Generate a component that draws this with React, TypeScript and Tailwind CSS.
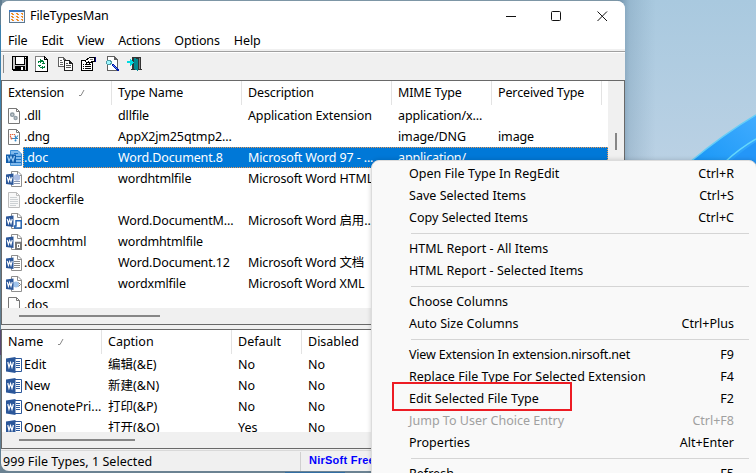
import React from "react";

const columns = ["w-[110px]", "w-[130px]", "w-[150px]", "w-[100px]", "w-[110px]"];
const lowerColumns = ["w-[100px]", "w-[130px]", "w-[70px]", "w-[90px]"];

type Kind = "gear" | "cut" | "doc" | "html" | "text" | "macro" | "mhtml" | "docx" | "xml" | "blank";

const files: { kind: Kind; cells: string[] }[] = [
  { kind: "gear", cells: [".dll", "dllfile", "Application Extension", "application/x...", ""] },
  { kind: "cut", cells: [".dng", "AppX2jm25qtmp2...", "", "image/DNG", "image"] },
  { kind: "doc", cells: [".doc", "Word.Document.8", "Microsoft Word 97 - ...", "application/", ""] },
  { kind: "html", cells: [".dochtml", "wordhtmlfile", "Microsoft Word HTML", "", ""] },
  { kind: "text", cells: [".dockerfile", "", "", "", ""] },
  { kind: "macro", cells: [".docm", "Word.DocumentM...", "Microsoft Word 启用...", "", ""] },
  { kind: "mhtml", cells: [".docmhtml", "wordmhtmlfile", "", "", ""] },
  { kind: "docx", cells: [".docx", "Word.Document.12", "Microsoft Word 文档", "", ""] },
  { kind: "xml", cells: [".docxml", "wordxmlfile", "Microsoft Word XML", "", ""] },
  { kind: "blank", cells: [".dos", "", "", "", ""] },
];

const verbs = [
  ["Edit", "编辑(&E)", "No", "No"],
  ["New", "新建(&N)", "No", "No"],
  ["OnenotePri...", "打印(&P)", "No", "No"],
  ["Open", "打开(&O)", "Yes", "No"],
];

const menu: ({ label: string; hint?: string; off?: boolean; tight?: boolean } | null)[] = [
  { label: "Open File Type In RegEdit", hint: "Ctrl+R" },
  { label: "Save Selected Items", hint: "Ctrl+S" },
  { label: "Copy Selected Items", hint: "Ctrl+C" },
  null,
  { label: "HTML Report - All Items" },
  { label: "HTML Report - Selected Items" },
  null,
  { label: "Choose Columns" },
  { label: "Auto Size Columns", hint: "Ctrl+Plus" },
  null,
  { label: "View Extension In extension.nirsoft.net", hint: "F9", tight: true },
  { label: "Replace File Type For Selected Extension", hint: "F4" },
  { label: "Edit Selected File Type", hint: "F2" },
  { label: "Jump To User Choice Entry", hint: "Ctrl+F8", off: true },
  { label: "Properties", hint: "Alt+Enter" },
  null,
  { label: "Refresh", hint: "F5" },
];

function WordBadge({ big }: { big?: boolean }) {
  return big ? (
    <>
      <path d="M0 1.6 9.5 0v16L0 14.4Z" fill="#2b579a" />
      <path d="M1.8 5 3 10.3 4.5 5.6 6 10.3 7.4 5" fill="none" stroke="#fff" strokeWidth="1.2" />
    </>
  ) : (
    <>
      <path d="M0 3.5 7.5 2.5v11.5L0 13Z" fill="#2b579a" />
      <path d="M1.2 6 2.4 10.3 3.7 6.5 5 10.3 6.2 6" fill="none" stroke="#fff" strokeWidth="1.1" />
    </>
  );
}

function FileIcon({ kind }: { kind: Kind }) {
  const wordy = ["html", "macro", "mhtml", "docx", "xml"].includes(kind);
  return (
    <svg viewBox="0 0 16 16" className="h-4 w-4 shrink-0">
      {(kind === "gear" || kind === "cut" || kind === "blank" || kind === "text") && (
        <path
          d="M2.5 .5H10.5L13.5 3.5V15.5H2.5ZM10.5 .5V3.5H13.5"
          fill={kind === "text" ? "#f8f8f8" : "#fdfdfd"}
          stroke={kind === "text" ? "#bdbdbd" : "#777"}
        />
      )}
      {kind === "gear" && (
        <>
          <circle cx="6.3" cy="6.7" r="1.7" fill="#c6cdd2" stroke="#8b98a1" strokeWidth="1.4" />
          <circle cx="9.6" cy="10" r="1.5" fill="#c6cdd2" stroke="#95a1aa" strokeWidth="1.4" />
        </>
      )}
      {kind === "cut" && (
        <>
          <path d="M4.5 8.5V5.5h4v2" fill="none" stroke="#e2633c" strokeWidth="1.2" strokeDasharray="1.5 .6" />
          <path d="M6 9.5h6M9.5 6.5v4M10 9l2-2.5" stroke="#3689c6" strokeWidth="1.1" />
          <circle cx="5.5" cy="9.5" r="1" fill="#d15f45" />
          <circle cx="9.5" cy="11.5" r="1" fill="#3689c6" />
        </>
      )}
      {kind === "text" && <path d="M4 5.5h7M4 7.5h8M4 9.5h8M4 11.5h8M4 13.5h6" stroke="#c2c6ca" strokeWidth=".8" />}
      {wordy && (
        <>
          <path d="M5.5 .5H12L15.5 4V15.5H5.5ZM11.5 .5V4.5H15.5" fill="#fff" stroke="#8f8f8f" />
          {kind === "docx" && <path d="M8 6.5h6M8 8.5h6M8 10.5h6M8 12.5h6" stroke="#888" />}
          {kind === "html" && (
            <>
              <circle cx="11" cy="6.5" r="3.2" fill="#aebfe4" />
              <path d="M8 10.5h6M8 12.5h6" stroke="#8b99b5" />
            </>
          )}
          {kind === "xml" && (
            <>
              <circle cx="10" cy="8.5" r="3" fill="#9fc3eb" />
              <path d="m12.5 6.5 2 2-2 2" fill="none" stroke="#777" />
            </>
          )}
          {kind === "macro" && <path d="M10 7.8h5.2V15H8.8v-2H10Z" fill="#fff" stroke="#2865b0" strokeWidth="1.5" />}
          {kind === "mhtml" && (
            <>
              <path d="M10 8.8h5V15H10Z" fill="#fff" stroke="#777" strokeWidth="2" />
              <path d="M12 11h1v2h-1Z" fill="#777" />
            </>
          )}
          <WordBadge />
        </>
      )}
      {kind === "doc" && (
        <>
          <path d="M4.5 .5H12L15.5 4V15.5H4.5Z" fill="#80b9ec" stroke="#3b8dd5" />
          <path d="M8 3.5h4M8 6.5h7M8 9.5h7M8 12.5h7" stroke="#1e74c5" />
          <path d="M0 4.5h10v8.5H0Z" fill="#0f5cab" />
          <path d="M1.5 6 3 11 5 6.5 7 11 8.5 6" fill="none" stroke="#9bcaf2" strokeWidth="1.2" />
        </>
      )}
    </svg>
  );
}

function VerbIcon() {
  return (
    <svg viewBox="0 0 16 16" className="h-4 w-4 shrink-0">
      <path d="M8 1.5h7.5v13H8Z" fill="#fff" stroke="#2b579a" />
      <path d="M10 4.5h4M10 6.5h4M10 8.5h4M10 10.5h4" stroke="#2b579a" />
      <WordBadge big />
    </svg>
  );
}

function Toolbar() {
  return (
    <div className="flex h-7 shrink-0 items-start border-t border-white bg-[#f0f0f0] pt-[3px] pl-[2px]">
      <span className="-mt-px h-[18px] w-px bg-[#8a8a8a]" />
      <svg viewBox="0 0 16 16" shapeRendering="crispEdges" className="ml-[8px] h-4 w-4">
        <path d="M0 0h16v15H1V14H0Z" fill="#000" />
        <path d="M1 1h2v12H1ZM13 3h1v11h-1ZM3 9h10v1H3Z" fill="#c8c8c8" />
        <path d="M4 1h8v7H4ZM13 1h1v1h-1Z" fill="#fff" />
        <path d="M9 11h2v3H9Z" fill="#fff" />
      </svg>
      <svg viewBox="0 0 14 16" shapeRendering="crispEdges" className="ml-[7px] h-4 w-[14px]">
        <path d="M0 0h10v1h1v1h1v1h1v13H0Z" fill="#000" />
        <path d="M0 0h9v1H1v14H0Z" fill="#808080" />
        <path d="M1 1h8v3h3v11H1Z" fill="#fff" />
        <path d="M10 2h1v1h-1Z" fill="#ddd" />
        <path d="M5 3h1v1h2v1h1v2h1v1H7V7h1V6H6v1H5V6H4v1H3V5h2ZM3 9h3v1H5v1h2v-1h1v1h1v-1h1v2H8v1H7v-1H5v-1H4v-1H3Z" fill="#00803c" />
      </svg>
      <svg viewBox="0 0 16 16" shapeRendering="crispEdges" className="ml-[9px] h-4 w-4">
        <path d="M0 1h6v1h1v1h1v8H0Z" fill="#606060" />
        <path d="M1 2h4v2h2v6H1Z" fill="#fff" />
        <path d="M2 4h2v1H2ZM2 6h3v1H2ZM2 8h3v1H2Z" fill="#666" />
        <path d="M6 4h6v1h1v1h1v1h1v8H6Z" fill="#222" />
        <path d="M7 5h4v3h3v6H7Z" fill="#fff" />
        <path d="M8 7h2v1H8ZM8 9h5v1H8ZM8 11h5v1H8Z" fill="#555" />
      </svg>
      <svg viewBox="0 0 16 16" shapeRendering="crispEdges" className="ml-[7px] h-4 w-4">
        <path d="M0 4h12v11H0Z" fill="#000" />
        <path d="M1 5h10v9H1Z" fill="#fff" />
        <path d="M2 8h1v1H2ZM4 8h6v1H4ZM2 10h1v1H2ZM4 10h6v1H4ZM2 12h1v1H2ZM4 12h6v1H4Z" fill="#000" />
        <path d="M3 4h2V3h1V2h2V1h6v5h-3v1h-2v1H8V7H6v1H5V6H4V5H3Z" fill="#000" />
        <path d="M5 4h2V3h1V2h5v3h-3v1H8V5H7v1H5Z" fill="#fff" />
        <path d="M9 3h3v1H9Z" fill="#777" />
        <path d="M14 1h1v5h-1Z" fill="#000080" />
      </svg>
      <svg viewBox="0 0 16 16" shapeRendering="crispEdges" className="ml-[8px] h-4 w-4">
        <path d="M2 0h8v1h1v1h1v1h1v12H2Z" fill="#606060" />
        <path d="M3 1h6v3h3v10H3Z" fill="#fff" />
        <path d="M2 4h4v1h1v3H6v1H2V8H1V5h1Z" fill="#4d9ba3" />
        <path d="M2 5h3v1h1v1H5v1H2Z" fill="#9ff6ff" />
        <path d="M7 8h2v1h1v1h1v1h1v1h1v1h1v2h-2v-1h-1v-1h-1v-1H9v-1H8v-1H7Z" fill="#0018a5" />
        <path d="M8 9h1v1h1v1h1v1h1v1h-1v-1h-1v-1H9v-1H8Z" fill="#5b8cff" />
      </svg>
      <svg viewBox="0 0 16 16" shapeRendering="crispEdges" className="ml-[6px] h-4 w-4">
        <path d="M5 1h9v12h1v1H4v-1h1Z" fill="#333" />
        <path d="M12 2h1v11h-1Z" fill="#808080" />
        <path d="M7 2h2v1h2v12h-1v-1H8v-1H7Z" fill="#008a91" />
        <path d="M0 5h3V3h1v1h1v1h1v1h1v1H6v1H5v1H4v1H3V7H0Z" fill="#00dbe2" />
      </svg>
    </div>
  );
}

function Header({ names, widths }: { names: string[]; widths: string[] }) {
  return (
    <div className="flex h-6 shrink-0">
      {names.map((n, i) => (
        <div key={n} className={`flex h-6 shrink-0 items-center border-r border-[#e3e3e3] pl-[6px] ${widths[i]}`}>
          {n}
          {i === 0 && (
            <svg viewBox="0 0 6 6" className="ml-[15px] h-[6px] w-[6px]">
              <path d="M0 5.5H2L5 0" fill="none" stroke="#888" />
            </svg>
          )}
        </div>
      ))}
    </div>
  );
}

function Desktop() {
  return (
    <svg viewBox="0 0 756 473" className="absolute inset-0 h-full w-full">
      <defs>
        <linearGradient id="sky" x1="0" y1="0" x2="0" y2="1">
          <stop offset="0" stopColor="#a9c9df" />
          <stop offset=".34" stopColor="#bad1e4" />
          <stop offset="1" stopColor="#90adc3" />
        </linearGradient>
        <linearGradient id="shade">
          <stop offset="0" stopColor="#4a6b85" stopOpacity=".62" />
          <stop offset=".3" stopColor="#5f829c" stopOpacity=".25" />
          <stop offset="1" stopColor="#6f91aa" stopOpacity="0" />
        </linearGradient>
        <linearGradient id="petal" x1="0" y1="1" x2="1" y2="0">
          <stop offset="0" stopColor="#1595f5" />
          <stop offset="1" stopColor="#41acff" />
        </linearGradient>
      </defs>
      <rect width="756" height="473" fill="url(#sky)" />
      <rect width="618" height="8" fill="#7d96a6" />
      <rect width="2" height="473" fill="#617e92" />
      <path d="M0 25h2v95H0Z" fill="#3d81ad" />
      <path d="M0 330h2v25H0Z" fill="#594a73" />
      <rect y="465" width="380" height="8" fill="#6b8292" />
      <path d="M285 472h60v1h-60Z" fill="#326fa5" />
      <rect x="618" width="38" height="170" fill="url(#shade)" />
      <path d="M690 162Q724 134 756 115V170H690Z" fill="url(#petal)" />
      <path d="M690 162Q724 134 756 115" fill="none" stroke="#65cdf7" strokeWidth="1.5" />
      <path d="M730 162Q743 150 756 142V165Z" fill="#2496f8" />
      <path d="M725 162Q739 149 756 139" fill="none" stroke="#65d7fb" strokeWidth="1.5" />
    </svg>
  );
}

export default function App() {
  return (
    <div className="relative h-[473px] w-[756px] overflow-hidden font-['Noto_Sans','Noto_Sans_CJK_SC',sans-serif] text-[12.5px] leading-5 whitespace-pre text-black">
      <Desktop />
      <div className="absolute top-px left-px flex h-[470px] w-[624px] flex-col overflow-hidden rounded-lg bg-[#f0f0f0]">
        <div className="flex h-[30px] shrink-0 items-center bg-white pl-2">
          <svg viewBox="0 0 16 13" shapeRendering="crispEdges" className="h-[13px] w-4">
            <path d="M0 0h16v13H0Z" fill="#5c7890" />
            <path d="M1 2h14v10H1Z" fill="#f3f6ff" />
            <path d="M0 0h13v2H0Z" fill="#3979c6" />
            <path d="M2 3h2v1h1v1H3V4H2ZM7 3h2v1h1v1H8V4H7ZM12 3h2v2h-1V4h-1ZM2 6h2v1h1v1H3V7H2ZM7 6h2v1h1v1H8V7H7ZM12 6h2v2h-1V7h-1ZM2 9h2v1h1v1H3v-1H2ZM7 9h2v1h1v1H8v-1H7ZM12 9h2v2h-1v-1h-1Z" fill="#ef8c22" />
          </svg>
          <span className="ml-[5px] tracking-[-0.1px]">FileTypesMan</span>
          <svg viewBox="0 0 102 10" className="mr-[17px] ml-auto h-[10px] w-[102px]" fill="none" stroke="#111">
            <path d="M0 5.5H10" />
            <rect x="45.5" y=".5" width="9" height="9" rx="1" />
            <path d="m91.5 .5 9.5 9.5M101 .5 91.5 10" />
          </svg>
        </div>
        <div className="flex h-[18px] shrink-0 items-center gap-[14px] bg-white pt-[2px] pl-[7px] tracking-[-0.13px]">
          {["File", "Edit", "View", "Actions", "Options", "Help"].map((m) => (
            <span key={m}>{m}</span>
          ))}
        </div>
        <div className="h-[3px] shrink-0 border-b border-[#a0a0a0]" />
        <Toolbar />
        <div className="flex h-[245px] shrink-0 border border-[#696969] tracking-[-0.13px]">
          <div className="flex h-[243px] w-[606px] flex-col">
            <div className="flex h-[227px] shrink-0 flex-col overflow-hidden bg-white">
              <Header names={["Extension", "Type Name", "Description", "MIME Type", "Perceived Type"]} widths={columns} />
              {files.map(({ kind, cells }) => (
                <div key={cells[0]} className="flex h-[21px] shrink-0 items-center pl-1">
                  <FileIcon kind={kind} />
                  <div
                    className={
                      kind === "doc"
                        ? "ml-px flex h-[21px] w-[585px] items-center border border-dotted border-[#e99a57] bg-[#0078d7] text-white"
                        : "ml-px flex h-[21px] w-[585px] items-center border border-transparent"
                    }
                  >
                    <span className="w-[94px] shrink-0">{cells[0]}</span>
                    <span className="w-[130px] shrink-0">{cells[1]}</span>
                    <span className="w-[150px] shrink-0">{cells[2]}</span>
                    <span className="w-[100px] shrink-0">{cells[3]}</span>
                    <span>{cells[4]}</span>
                  </div>
                </div>
              ))}
            </div>
            <div className="flex h-4 items-center pl-[17px]">
              <div className="h-[2px] w-[141px] bg-[#868686]" />
            </div>
          </div>
          <div className="w-4 pt-[52px] pl-[7px]">
            <div className="h-[17px] w-[2px] bg-[#868686]" />
          </div>
        </div>
        <div className="h-1 shrink-0" />
        <div className="h-[120px] shrink-0 border border-[#696969]">
          <div className="flex h-[102px] flex-col overflow-hidden bg-white">
            <Header names={["Name", "Caption", "Default", "Disabled"]} widths={lowerColumns} />
            {verbs.map((v) => (
              <div key={v[0]} className="flex h-[21px] shrink-0 items-center pl-1">
                <VerbIcon />
                <span className="ml-[2px] w-[84px] shrink-0">{v[0]}</span>
                <span className="w-[130px] shrink-0">{v[1]}</span>
                <span className="w-[70px] shrink-0">{v[2]}</span>
                <span>{v[3]}</span>
              </div>
            ))}
          </div>
          <div className="flex h-4 items-center pl-[17px]">
            <div className="h-[2px] w-[116px] bg-[#868686]" />
          </div>
        </div>
        <div className="mt-px flex h-[22px] shrink-0 items-center border-t border-[#d9d9d9]">
          <span className="w-[299px] pl-[2px] tracking-[0.04px]">999 File Types, 1 Selected</span>
          <span className="h-[19px] border-l border-[#d0d0d0] pl-2 font-['Liberation_Sans',sans-serif] text-[11px] leading-[17px] font-bold tracking-[0.25px] text-[#0000ff]">
            NirSoft Freeware.  http://www.nirsoft.net
          </span>
        </div>
      </div>

      <div className="absolute top-[160px] left-[371px] h-[330px] w-[386px] rounded-lg border border-[#dcdcdc] bg-[#f9f9f9] pt-[2px] shadow-[0_0_5px_rgba(0,0,0,0.18)]">
        {menu.map((m, i) =>
          m ? (
            <div
              key={m.label}
              className={
                m.off
                  ? "flex h-[22px] items-center justify-between pr-[22px] pl-[37px] text-[#a0a0a0]"
                  : "flex h-[22px] items-center justify-between pr-[22px] pl-[37px]"
              }
            >
              <span className={m.tight ? "tracking-[-0.18px]" : "tracking-[0.02px]"}>{m.label}</span>
              <span>{m.hint}</span>
            </div>
          ) : (
            <div key={i} className="flex h-[9px] items-center pr-[7px] pl-[39px]">
              <div className="h-px w-full bg-[#d5d5d5]" />
            </div>
          )
        )}
      </div>
      <div className="absolute top-[382px] left-[392px] h-[29px] w-[180px] border-2 border-[#ed1c24]" />
    </div>
  );
}
